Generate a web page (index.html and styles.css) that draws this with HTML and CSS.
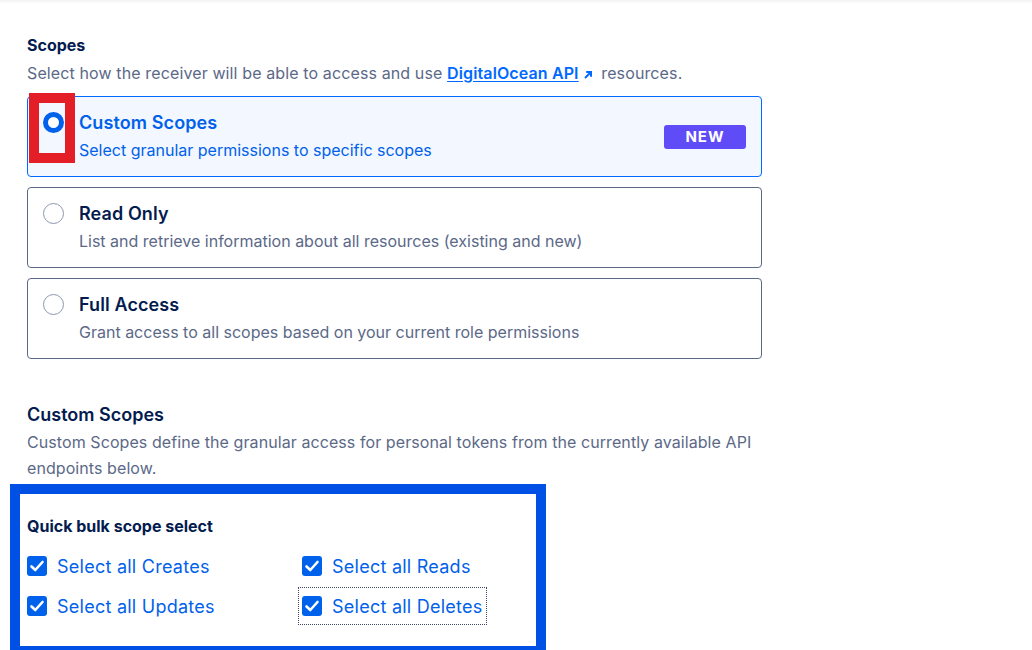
FILE: index.html
```html
<!DOCTYPE html>
<html>
<head>
<meta charset="utf-8">
<link rel="stylesheet" href="styles.css">
</head>
<body>
<div class="topbar"></div>
<main class="page">
  <section class="scopes">
    <h3 class="label">Scopes</h3>
    <p class="desc">Select how the receiver will be able to access and use <a class="link" href="#">DigitalOcean API<svg class="ext" viewBox="0 0 10 10" width="10" height="10"><path d="M2 8 L8 2 M3.2 2 H8 V6.8" fill="none" stroke="currentColor" stroke-width="2"/></svg></a> resources.</p>
    <div class="options">
      <div class="card selected">
        <span class="radio on"></span>
        <div class="card-text">
          <div class="card-title">Custom Scopes</div>
          <div class="card-sub">Select granular permissions to specific scopes</div>
        </div>
        <span class="badge">NEW</span>
        <span class="mark-red"></span>
      </div>
      <div class="card">
        <span class="radio"></span>
        <div class="card-text">
          <div class="card-title">Read Only</div>
          <div class="card-sub">List and retrieve information about all resources (existing and new)</div>
        </div>
      </div>
      <div class="card">
        <span class="radio"></span>
        <div class="card-text">
          <div class="card-title">Full Access</div>
          <div class="card-sub">Grant access to all scopes based on your current role permissions</div>
        </div>
      </div>
    </div>
  </section>
  <section class="custom">
    <h3 class="heading">Custom Scopes</h3>
    <p class="para">Custom Scopes define the granular access for personal tokens from the currently available API endpoints below.</p>
    <div class="bulk">
      <div class="bulk-title">Quick bulk scope select</div>
      <div class="grid">
        <label class="check"><span class="box"><svg viewBox="0 0 20 20" width="20" height="20"><path d="M4.5 10.5 L8.3 14 L15.5 6" fill="none" stroke="#fff" stroke-width="2.6" stroke-linecap="round" stroke-linejoin="round"/></svg></span>Select all Creates</label>
        <label class="check"><span class="box"><svg viewBox="0 0 20 20" width="20" height="20"><path d="M4.5 10.5 L8.3 14 L15.5 6" fill="none" stroke="#fff" stroke-width="2.6" stroke-linecap="round" stroke-linejoin="round"/></svg></span>Select all Reads</label>
        <label class="check"><span class="box"><svg viewBox="0 0 20 20" width="20" height="20"><path d="M4.5 10.5 L8.3 14 L15.5 6" fill="none" stroke="#fff" stroke-width="2.6" stroke-linecap="round" stroke-linejoin="round"/></svg></span>Select all Updates</label>
        <label class="check focus"><span class="box"><svg viewBox="0 0 20 20" width="20" height="20"><path d="M4.5 10.5 L8.3 14 L15.5 6" fill="none" stroke="#fff" stroke-width="2.6" stroke-linecap="round" stroke-linejoin="round"/></svg></span>Select all Deletes</label>
      </div>
    </div>
  </section>
</main>
</body>
</html>
```
FILE: styles.css
```css
* { box-sizing: border-box; }
html, body { margin: 0; padding: 0; background: #fff; }
body {
  font-family: Inter, "Liberation Sans", sans-serif;
  color: #031b4e;
  width: 1032px;
  height: 650px;
  overflow: hidden;
}
.topbar {
  height: 4px;
  background: linear-gradient(#f2f2f2, #fff);
}
.page {
  padding: 31px 0 0 27px;
}
.label {
  margin: 0;
  font-size: 16px;
  font-weight: 700;
  line-height: 20px;
}
.desc {
  margin: 7px 0 0;
  font-size: 16px;
  line-height: 22px;
  color: #5b6987;
  letter-spacing: 0.12px;
}
.link {
  color: #0069ff;
  font-weight: 600;
  text-decoration: underline;
  text-underline-offset: 2px;
  margin-right: 4px;
}
.ext { margin-left: 4px; vertical-align: -1px; }
.options {
  margin-top: 12px;
  width: 735px;
  display: flex;
  flex-direction: column;
  gap: 10px;
}
.card {
  position: relative;
  display: flex;
  align-items: flex-start;
  height: 81px;
  border: 1px solid #5b6987;
  border-radius: 4px;
  padding: 14px 15px 0 15px;
}
.card.selected {
  border-color: #0069ff;
  background: #f3f7ff;
}
.radio {
  flex: none;
  width: 21px;
  height: 21px;
  border-radius: 50%;
  border: 1px solid #8d97b0;
  background: #fff;
  margin-top: 1px;
}
.radio.on {
  border: 5px solid #0061eb;
}
.card-text { margin-left: 15px; flex: 1; }
.card-title {
  font-size: 18px;
  font-weight: 600;
  line-height: 24px;
  letter-spacing: 0.1px;
}
.card-sub {
  margin-top: 4px;
  font-size: 16px;
  line-height: 22px;
  color: #5b6987;
}
.selected .card-title, .selected .card-sub { color: #0061eb; }
.badge {
  align-self: center;
  margin-top: -14px;
  width: 82px;
  height: 24px;
  border-radius: 3px;
  background: #5f4cf7;
  color: #fff;
  font-weight: 700;
  font-size: 15px;
  letter-spacing: 1px;
  display: flex;
  align-items: center;
  justify-content: center;
}
.mark-red {
  position: absolute;
  left: 1px;
  top: -4px;
  width: 46px;
  height: 70px;
  border: 10px solid #e41e26;
}
.custom { margin-top: 44px; }
.heading {
  margin: 0;
  font-size: 18px;
  font-weight: 600;
  line-height: 24px;
}
.para {
  margin: 2px 0 0;
  width: 740px;
  font-size: 16px;
  line-height: 26px;
  color: #5b6987;
  letter-spacing: 0.08px;
}
.bulk {
  margin: 3px 0 0 -17px;
  width: 536px;
  height: 172px;
  border: 10px solid #0050e6;
  padding: 22px 0 0 7px;
}
.bulk-title {
  font-size: 16px;
  font-weight: 700;
  line-height: 20px;
}
.grid {
  margin-top: 15px;
  display: grid;
  grid-template-columns: 275px auto;
  row-gap: 10px;
}
.check {
  display: flex;
  align-items: center;
  gap: 10px;
  height: 30px;
  font-size: 18px;
  letter-spacing: 0.25px;
  color: #0061eb;
  justify-self: start;
}
.box {
  width: 20px;
  height: 20px;
  border-radius: 3px;
  background: #0061eb;
  display: block;
}
.box svg { display: block; }
.check.focus {
  outline: 1px dotted #3b4660;
  outline-offset: 3px;
}
```
